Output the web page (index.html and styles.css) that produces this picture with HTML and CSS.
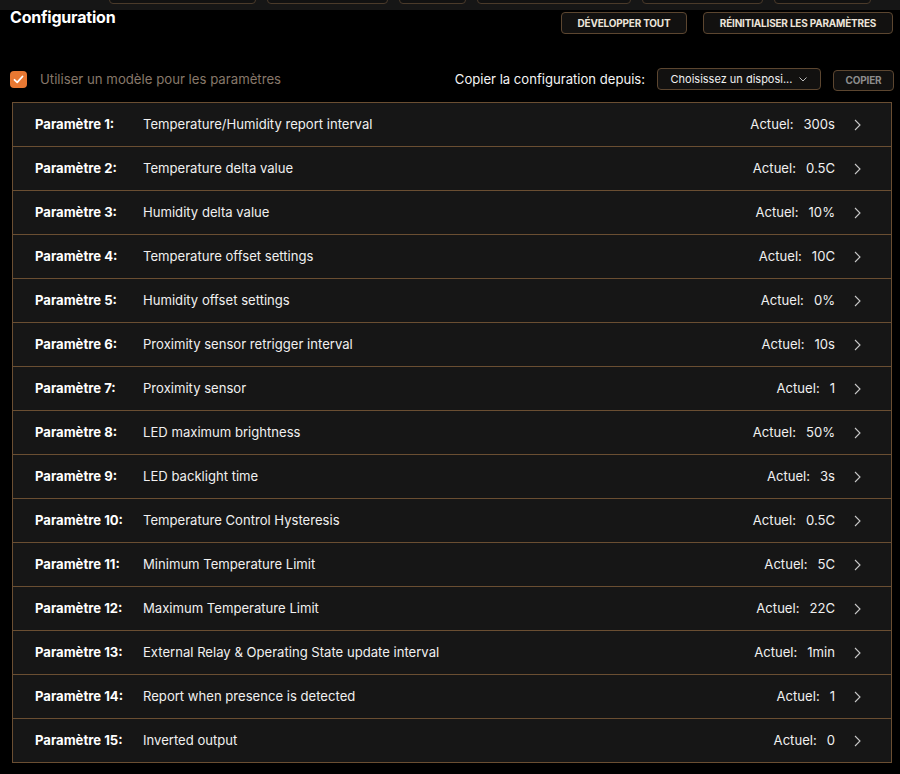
FILE: index.html
```html
<!DOCTYPE html>
<html lang="fr">
<head>
<meta charset="utf-8">
<link rel="stylesheet" href="styles.css">
</head>
<body>
<div class="topstrip">
  <span class="tb tb1"></span>
  <span class="tb tb2"></span>
  <span class="tb tb3"></span>
  <span class="tb tb4"></span>
  <span class="tb tb5"></span>
  <span class="tb tb6"></span>
</div>
<div class="header">
  <h1 class="title">Configuration</h1>
  <div class="actions">
    <button class="btn btn-expand">Développer tout</button>
    <button class="btn btn-reset">Réinitialiser les paramètres</button>
  </div>
</div>
<div class="toolbar">
  <label class="tpl">
    <span class="checkbox"><svg width="11" height="9" viewBox="0 0 11 9"><path d="M1.5 4.8 L4.2 7.3 L9.5 1.5" fill="none" stroke="#fff" stroke-width="1.8" stroke-linecap="round" stroke-linejoin="round"/></svg></span>
    <span class="tpl-text">Utiliser un modèle pour les paramètres</span>
  </label>
  <div class="copy">
    <span class="copy-label">Copier la configuration depuis:</span>
    <div class="select"><span>Choisissez un disposi...</span><svg width="8" height="5" viewBox="0 0 8 5"><path d="M0.5 0.5 L4 4 L7.5 0.5" fill="none" stroke="#bbb" stroke-width="1"/></svg></div>
    <button class="btn btn-copy">Copier</button>
  </div>
</div>
<div class="list">
  <div class="row"><span class="pname">Paramètre 1:</span><span class="pdesc">Temperature/Humidity report interval</span><span class="cur">Actuel:</span><span class="val">300s</span><svg class="chev" width="7" height="12" viewBox="0 0 7 12"><path d="M1 1 L6 6 L1 11" fill="none" stroke="#c8c8c8" stroke-width="1.1"/></svg></div>
  <div class="row"><span class="pname">Paramètre 2:</span><span class="pdesc">Temperature delta value</span><span class="cur">Actuel:</span><span class="val">0.5C</span><svg class="chev" width="7" height="12" viewBox="0 0 7 12"><path d="M1 1 L6 6 L1 11" fill="none" stroke="#c8c8c8" stroke-width="1.1"/></svg></div>
  <div class="row"><span class="pname">Paramètre 3:</span><span class="pdesc">Humidity delta value</span><span class="cur">Actuel:</span><span class="val">10%</span><svg class="chev" width="7" height="12" viewBox="0 0 7 12"><path d="M1 1 L6 6 L1 11" fill="none" stroke="#c8c8c8" stroke-width="1.1"/></svg></div>
  <div class="row"><span class="pname">Paramètre 4:</span><span class="pdesc">Temperature offset settings</span><span class="cur">Actuel:</span><span class="val">10C</span><svg class="chev" width="7" height="12" viewBox="0 0 7 12"><path d="M1 1 L6 6 L1 11" fill="none" stroke="#c8c8c8" stroke-width="1.1"/></svg></div>
  <div class="row"><span class="pname">Paramètre 5:</span><span class="pdesc">Humidity offset settings</span><span class="cur">Actuel:</span><span class="val">0%</span><svg class="chev" width="7" height="12" viewBox="0 0 7 12"><path d="M1 1 L6 6 L1 11" fill="none" stroke="#c8c8c8" stroke-width="1.1"/></svg></div>
  <div class="row"><span class="pname">Paramètre 6:</span><span class="pdesc">Proximity sensor retrigger interval</span><span class="cur">Actuel:</span><span class="val">10s</span><svg class="chev" width="7" height="12" viewBox="0 0 7 12"><path d="M1 1 L6 6 L1 11" fill="none" stroke="#c8c8c8" stroke-width="1.1"/></svg></div>
  <div class="row"><span class="pname">Paramètre 7:</span><span class="pdesc">Proximity sensor</span><span class="cur">Actuel:</span><span class="val">1</span><svg class="chev" width="7" height="12" viewBox="0 0 7 12"><path d="M1 1 L6 6 L1 11" fill="none" stroke="#c8c8c8" stroke-width="1.1"/></svg></div>
  <div class="row"><span class="pname">Paramètre 8:</span><span class="pdesc">LED maximum brightness</span><span class="cur">Actuel:</span><span class="val">50%</span><svg class="chev" width="7" height="12" viewBox="0 0 7 12"><path d="M1 1 L6 6 L1 11" fill="none" stroke="#c8c8c8" stroke-width="1.1"/></svg></div>
  <div class="row"><span class="pname">Paramètre 9:</span><span class="pdesc">LED backlight time</span><span class="cur">Actuel:</span><span class="val">3s</span><svg class="chev" width="7" height="12" viewBox="0 0 7 12"><path d="M1 1 L6 6 L1 11" fill="none" stroke="#c8c8c8" stroke-width="1.1"/></svg></div>
  <div class="row"><span class="pname">Paramètre 10:</span><span class="pdesc">Temperature Control Hysteresis</span><span class="cur">Actuel:</span><span class="val">0.5C</span><svg class="chev" width="7" height="12" viewBox="0 0 7 12"><path d="M1 1 L6 6 L1 11" fill="none" stroke="#c8c8c8" stroke-width="1.1"/></svg></div>
  <div class="row"><span class="pname">Paramètre 11:</span><span class="pdesc">Minimum Temperature Limit</span><span class="cur">Actuel:</span><span class="val">5C</span><svg class="chev" width="7" height="12" viewBox="0 0 7 12"><path d="M1 1 L6 6 L1 11" fill="none" stroke="#c8c8c8" stroke-width="1.1"/></svg></div>
  <div class="row"><span class="pname">Paramètre 12:</span><span class="pdesc">Maximum Temperature Limit</span><span class="cur">Actuel:</span><span class="val">22C</span><svg class="chev" width="7" height="12" viewBox="0 0 7 12"><path d="M1 1 L6 6 L1 11" fill="none" stroke="#c8c8c8" stroke-width="1.1"/></svg></div>
  <div class="row"><span class="pname">Paramètre 13:</span><span class="pdesc">External Relay &amp; Operating State update interval</span><span class="cur">Actuel:</span><span class="val">1min</span><svg class="chev" width="7" height="12" viewBox="0 0 7 12"><path d="M1 1 L6 6 L1 11" fill="none" stroke="#c8c8c8" stroke-width="1.1"/></svg></div>
  <div class="row"><span class="pname">Paramètre 14:</span><span class="pdesc">Report when presence is detected</span><span class="cur">Actuel:</span><span class="val">1</span><svg class="chev" width="7" height="12" viewBox="0 0 7 12"><path d="M1 1 L6 6 L1 11" fill="none" stroke="#c8c8c8" stroke-width="1.1"/></svg></div>
  <div class="row"><span class="pname">Paramètre 15:</span><span class="pdesc">Inverted output</span><span class="cur">Actuel:</span><span class="val">0</span><svg class="chev" width="7" height="12" viewBox="0 0 7 12"><path d="M1 1 L6 6 L1 11" fill="none" stroke="#c8c8c8" stroke-width="1.1"/></svg></div>
</div>
</body>
</html>
```
FILE: styles.css
```css
html, body {
  margin: 0;
  padding: 0;
  background: #000;
  color: #f2f2f2;
  font-family: Inter, "Noto Sans", sans-serif;
}

.topstrip {
  height: 10px;
  background: #161616;
  overflow: hidden;
  display: flex;
  align-items: flex-end;
  box-sizing: border-box;
}
.tb {
  display: block;
  height: 20px;
  margin-bottom: 6px;
  border: 1px solid #4a3a2a;
  border-radius: 4px;
  background: #111;
  box-sizing: border-box;
  flex: none;
}
.tb1 { width: 147px; margin-left: 109px; }
.tb2 { width: 121px; margin-left: 11px; }
.tb3 { width: 67px; margin-left: 11px; }
.tb4 { width: 154px; margin-left: 11px; }
.tb5 { width: 121px; margin-left: 11px; }
.tb6 { width: 97px; margin-left: 11px; }

.header {
  display: flex;
  justify-content: space-between;
  align-items: flex-start;
  padding: 0 7px 0 10px;
}
.title {
  margin: 0;
  font-size: 16px;
  font-weight: 700;
  line-height: 14px;
  color: #fff;
  letter-spacing: -0.2px;
}
.actions {
  display: flex;
  gap: 16px;
  margin-top: 2px;
}
.btn {
  font-family: Inter, "Noto Sans", sans-serif;
  font-size: 10px;
  font-weight: 700;
  text-transform: uppercase;
  color: #ece4da;
  background: #121110;
  border: 1px solid #5c4630;
  border-radius: 4px;
  height: 22px;
  padding: 0;
  letter-spacing: -0.2px;
  cursor: pointer;
}
.btn-expand { width: 126px; }
.btn-reset { width: 190px; }

.toolbar {
  display: flex;
  justify-content: space-between;
  align-items: center;
  padding: 0 6px 0 10px;
  margin-top: 33px;
  height: 24px;
}
.tpl {
  display: flex;
  align-items: center;
  gap: 13px;
}
.checkbox {
  width: 17px;
  height: 17px;
  border-radius: 4px;
  background: #e87832;
  display: flex;
  align-items: center;
  justify-content: center;
}
.tpl-text {
  font-size: 13.2px;
  color: #87786a;
}
.copy {
  display: flex;
  align-items: center;
}
.copy-label {
  font-size: 13.1px;
  color: #f4f4f4;
  margin-right: 12px;
}
.select {
  width: 164px;
  height: 22px;
  box-sizing: border-box;
  border: 1px solid #5c4630;
  border-radius: 4px;
  background: #121110;
  display: flex;
  align-items: center;
  justify-content: center;
  gap: 7px;
  font-size: 11px;
  color: #f0f0f0;
  margin-right: 12px;
}
.btn-copy {
  width: 61px;
  height: 21px;
  color: #8c8c8c;
  margin-top: 2px;
}

.list {
  margin: 11px 8px 0 12px;
  border: 1px solid #6a4e32;
  border-bottom: none;
}
.row {
  display: flex;
  align-items: center;
  height: 44px;
  box-sizing: border-box;
  border-bottom: 1px solid #6a4e32;
  background: #161616;
  padding: 0 30px 1px 22px;
  font-size: 13.1px;
}
.pname {
  width: 108px;
  flex: none;
  font-weight: 700;
  color: #fff;
}
.pdesc {
  flex: 1;
  color: #f0f0f0;
}
.cur {
  color: #f0f0f0;
}
.val {
  margin-left: 10px;
  color: #f0f0f0;
}
.chev {
  margin-left: 19px;
  margin-top: 2px;
  flex: none;
}
```
